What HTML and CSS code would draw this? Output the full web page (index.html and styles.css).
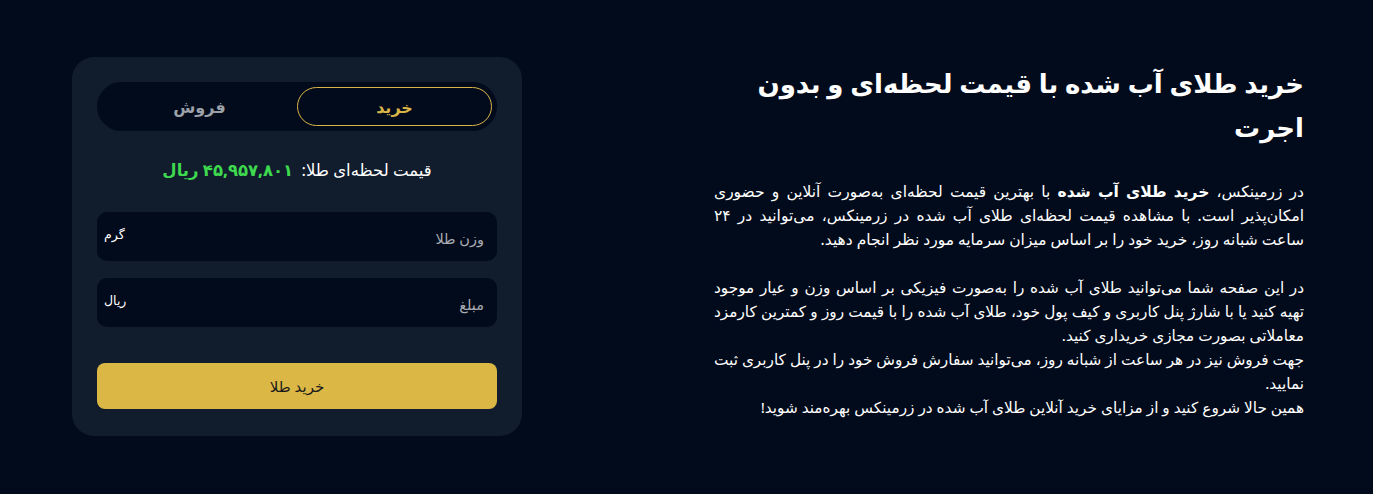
FILE: index.html
```html
<!DOCTYPE html>
<html lang="fa" dir="rtl">
<head>
<meta charset="utf-8">
<title>خرید طلای آب شده</title>
<link rel="stylesheet" href="styles.css">
</head>
<body>
<main class="page">
  <section class="info">
    <h1 class="title">خرید طلای آب شده با قیمت لحظه‌ای و بدون اجرت</h1>
    <p class="para para-lead">در زرمینکس، <b>خرید طلای آب شده</b> با بهترین قیمت لحظه‌ای به‌صورت آنلاین و حضوری امکان‌پذیر است. با مشاهده قیمت لحظه‌ای طلای آب شده در زرمینکس، می‌توانید در ۲۴ ساعت شبانه روز، خرید خود را بر اساس میزان سرمایه مورد نظر انجام دهید.</p>
    <p class="para">در این صفحه شما می‌توانید طلای آب شده را به‌صورت فیزیکی بر اساس وزن و عیار موجود تهیه کنید یا با شارژ پنل کاربری و کیف پول خود، طلای آب شده را با قیمت روز و کمترین کارمزد معاملاتی بصورت مجازی خریداری کنید.<br>جهت فروش نیز در هر ساعت از شبانه روز، می‌توانید سفارش فروش خود را در پنل کاربری ثبت نمایید.<br>همین حالا شروع کنید و از مزایای خرید آنلاین طلای آب شده در زرمینکس بهره‌مند شوید!</p>
  </section>
  <section class="card">
    <div class="tabs">
      <button class="tab tab-active">خرید</button>
      <button class="tab">فروش</button>
    </div>
    <div class="price">قیمت لحظه‌ای طلا: <span class="price-val">۴۵,۹۵۷,۸۰۱ ریال</span></div>
    <div class="field">
      <span class="ph">وزن طلا</span>
      <span class="unit">گرم</span>
    </div>
    <div class="field">
      <span class="ph">مبلغ</span>
      <span class="unit">ریال</span>
    </div>
    <button class="buy">خرید طلا</button>
  </section>
</main>
</body>
</html>
```
FILE: styles.css
```css
html, body {
  margin: 0;
  padding: 0;
  background: #020b1b;
  color: #ffffff;
  font-family: "Noto Sans", "DejaVu Sans", sans-serif;
}
.page {
  display: flex;
  justify-content: space-between;
  align-items: flex-start;
  padding: 57px 69px 0 72px;
  height: 494px;
  box-sizing: border-box;
}
.info {
  width: 590px;
  padding-top: 4px;
}
.title {
  margin: 0 0 30px;
  font-size: 26px;
  line-height: 44px;
  font-weight: 800;
}
.para {
  margin: 0 0 24px;
  font-size: 15.3px;
  line-height: 24px;
  text-align: justify;
}
.para-lead { font-size: 15.5px; }
.para b { font-weight: 800; }
.card {
  width: 450px;
  height: 379px;
  box-sizing: border-box;
  background: #111c2c;
  border-radius: 22px;
  padding: 25px 25px 0;
}
.tabs {
  display: flex;
  background: #020b1b;
  border-radius: 25px;
  height: 49px;
  padding: 5px;
  box-sizing: border-box;
}
.tab {
  flex: 1;
  border: 1px solid transparent;
  background: transparent;
  border-radius: 20px;
  font-family: inherit;
  font-size: 16px;
  font-weight: 700;
  color: #9ca0a8;
}
.tab-active {
  color: #d9b548;
  border-color: #d9b548;
}
.price {
  text-align: center;
  margin: 27px 0 30px;
  font-size: 16.5px;
  line-height: 24px;
}
.price-val {
  color: #3ed94e;
  font-weight: 800;
  margin-right: 4px;
}
.field {
  display: flex;
  justify-content: space-between;
  align-items: center;
  height: 49px;
  background: #020b1b;
  border-radius: 10px;
  padding: 0 13px 0 7px;
  margin-bottom: 17px;
  font-size: 14.5px;
}
.ph { color: #a8abb2; padding-top: 3px; }
.unit { color: #ffffff; font-size: 12.5px; padding-bottom: 4px; }
.buy {
  display: block;
  width: 100%;
  height: 46px;
  margin-top: 36px;
  border: 0;
  border-radius: 8px;
  background: #dbb845;
  color: #1a1a1a;
  font-family: inherit;
  font-size: 15px;
}
```
